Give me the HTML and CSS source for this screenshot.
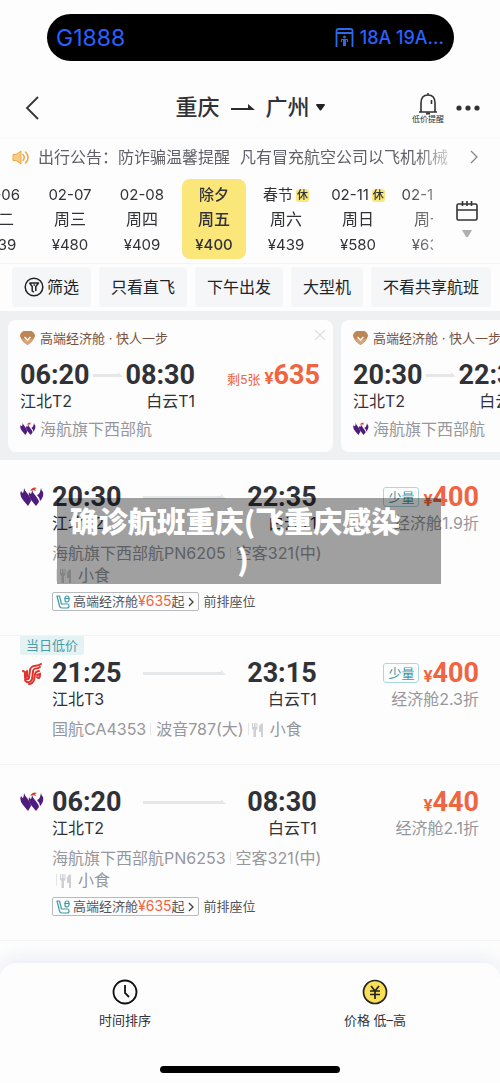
FILE: index.html
```html
<!DOCTYPE html>
<html lang="zh-CN">
<head>
<meta charset="utf-8">
<meta name="viewport" content="width=device-width, initial-scale=1">
<title>重庆 - 广州 航班列表</title>
<link rel="stylesheet" href="styles.css">
</head>
<body>
<svg class="sprite" aria-hidden="true">
  <symbol id="west-air" viewBox="0 0 24 20">
    <path d="M4 1Q5 4 7 6Q11 11 11 14L8 19L3 13Q-1 8 1 4Q2 6 3 6Q4 4 4 1Z" fill="#4f1b7c"/>
    <path d="M12 3Q13 6 15 8Q19 13 19 15L16 19L11 13Q8 8 9 5Q10 7 11 7Q12 5 12 3Z" fill="#4f1b7c"/>
    <path d="M21 1Q21 3 23 5Q24 9 21 13L20 14Q20 11 17 8Q19 8 20 5Z" fill="#4f1b7c"/>
    <path d="M10 4C12 0 15 0 17 1L15 2L16 4C14 3 12 3 10 4Z" fill="#d8402f"/>
  </symbol>
  <symbol id="air-china" viewBox="0 0 20 22">
    <g fill="none" stroke="#e2332b" stroke-width="2" stroke-linecap="round">
      <path d="M19 1C15 4 9 1 8 7L7 14C7 17 3 17 3 14V9L1 8"/>
      <path d="M18 4C14 7 11 4 11 9L10 16C9 20 4 20 3 17"/>
      <path d="M17 8C14 9 14 8 13 11L12 17C11 20 9 21 7 21"/>
      <path d="M5 8V14M15 12L18 11C18 15 17 16 15 14"/>
    </g>
  </symbol>
  <symbol id="gem" viewBox="0 0 15 14">
    <path d="M3.500 0H11.500Q15 2 15 5C14 9 11 12 7.500 14C4 12 1 9 0 5Q0 2 3.500 0Z" fill="#bd8654"/>
    <path d="M1 7Q7 10 14 7C12 10 10 12 7.500 14C5 12 3 10 1 7Z" fill="#d9a67d"/>
    <path d="M4.500 6L7.500 9L10.500 6" fill="none" stroke="#fff" stroke-width="1.400"/>
  </symbol>
  <symbol id="seat" viewBox="0 0 14 14">
    <g fill="none" stroke="#3f9ba5" stroke-width="1.200" stroke-linejoin="round" stroke-linecap="round">
      <path d="M1 1H3.500L5.500 9H12Q13 9 13 11Q13 13 11 13H6Q4 13 3.500 11Z"/>
      <rect x="9" y="1" width="4" height="6" rx="2"/><path d="M9 3.500H13"/>
    </g>
  </symbol>
  <symbol id="meal" viewBox="0 0 12 14">
    <path d="M0 0H1V4H2V0H3.500V4H4.500V0H5.500V5Q5.500 6.500 4 7V14H1.500V7Q0 6.500 0 5ZM11 0V14H9V9H7V4Q7.500 1 11 0Z" fill="#cfd0d3"/>
  </symbol>
  <symbol id="short-arrow" viewBox="0 0 30 6"><path d="M0 2H25V0L30 5H0Z" fill="#e6e7e8"/></symbol>
  <symbol id="long-arrow" viewBox="0 0 83 6"><path d="M0 2H78V0L83 5H0Z" fill="#e6e7e8"/></symbol>
</svg>

<div class="island">
  <span class="island-train">G1888</span>
  <span class="island-seat">
    <svg width="19" height="20" viewBox="0 0 19 20" fill="none" stroke="#2a6bea" stroke-width="1.800"><path d="M1.500 19V3Q1.500 1 3.500 1H15.500Q17.500 1 17.500 3V19M2 5H17"/><circle cx="9.500" cy="9" r="1" fill="#2a6bea" stroke-width="1"/><path d="M9.500 11V18" stroke-width="3"/><path d="M6.500 14V11.500H12.500V14" stroke-width="1"/></svg>
    18A 19A...
  </span>
</div>

<header class="header">
  <button class="icon-btn back" aria-label="返回"><svg width="14" height="24" viewBox="0 0 14 24" fill="none" stroke="#333" stroke-width="1.800"><path d="M13 1L2 12L13 23"/></svg></button>
  <h1 class="route">
    <span>重庆</span>
    <svg width="24" height="8" viewBox="0 0 24 8"><path d="M0 4H17V0L24 6H0Z" fill="#2b2b2e"/></svg>
    <span class="dest">广州<svg width="9" height="7" viewBox="0 0 9 7"><path d="M0 1Q0 0 1 0H8Q9 0 9 1L5 6.500H4Z" fill="#222"/></svg></span>
  </h1>
  <div class="tools">
    <button class="icon-btn alert">
      <svg width="20" height="22" viewBox="0 0 20 22" fill="none" stroke="#333" stroke-width="1.600"><path d="M1 19H19M3 19V10Q3 2 10 2Q17 2 17 10V19M10 0V2M13.500 7V11"/><path d="M8 20.500H12" stroke-width="2"/></svg>
      <span>低价提醒</span>
    </button>
    <button class="icon-btn" aria-label="更多"><svg width="24" height="6" viewBox="0 0 24 6" fill="#333"><circle cx="3" cy="3" r="2.600"/><circle cx="12" cy="3" r="2.600"/><circle cx="21" cy="3" r="2.600"/></svg></button>
  </div>
</header>

<a class="notice" href="#">
  <svg width="18" height="15" viewBox="0 0 18 15"><path d="M1 4.500H4L9 1V14L4 10.500H1Z" fill="#f8cc82" stroke="#eda746" stroke-linejoin="round"/><path d="M11 4.500Q13.500 7.500 11 10.500M13.500 2Q18.500 7.500 13.500 13" fill="none" stroke="#eda746" stroke-width="1.500" stroke-linecap="round"/></svg>
  <span class="notice-text">出行公告：防诈骗温馨提醒<span class="notice-body">凡有冒充航空公司以飞机机械</span></span>
  <svg width="8" height="14" viewBox="0 0 8 14" fill="none" stroke="#85868b" stroke-width="1.300"><path d="M1 1L7 7L1 13"/></svg>
</a>

<nav class="dates">
  <div class="date-strip">
    <button class="date"><span class="day">02-06</span><span class="week">周二</span><span class="fare">¥439</span></button>
    <button class="date"><span class="day">02-07</span><span class="week">周三</span><span class="fare">¥480</span></button>
    <button class="date"><span class="day">02-08</span><span class="week">周四</span><span class="fare">¥409</span></button>
    <button class="date selected" aria-current="date"><span class="day">除夕</span><span class="week">周五</span><span class="fare">¥400</span></button>
    <button class="date"><span class="day">春节<i class="off">休</i></span><span class="week">周六</span><span class="fare">¥439</span></button>
    <button class="date"><span class="day">02-11<i class="off">休</i></span><span class="week">周日</span><span class="fare">¥580</span></button>
    <button class="date"><span class="day">02-12<i class="off">休</i></span><span class="week">周一</span><span class="fare">¥630</span></button>
  </div>
  <button class="calendar" aria-label="选择日期">
    <svg width="22" height="20" viewBox="0 0 22 20" fill="none" stroke="#333" stroke-width="1.600"><rect x="1" y="3" width="20" height="16" rx="1.500"/><path d="M1 9H21M6.500 0V5M11 0V5M15.500 0V5"/></svg>
    <svg width="10" height="8" viewBox="0 0 10 8"><path d="M0 0H10L6 7H4Z" fill="#b0b0b0"/></svg>
  </button>
</nav>

<div class="filters">
  <button class="chip"><svg width="20" height="20" viewBox="0 0 20 20" fill="none" stroke="#222" stroke-width="1.500"><circle cx="10" cy="10" r="8.800"/><path d="M5.500 6H14.500L11.800 9.500V14M5.500 6L8.200 9.500V14L10 15.200M9.500 8H11" stroke-linejoin="round"/></svg>筛选</button>
  <button class="chip">只看直飞</button>
  <button class="chip">下午出发</button>
  <button class="chip">大型机</button>
  <button class="chip">不看共享航班</button>
</div>

<section class="promos">
  <article class="promo">
    <button class="icon-btn close" aria-label="关闭"><svg width="10" height="10" viewBox="0 0 10 10" stroke="#dcdcdc" stroke-width="1.200"><path d="M0 0L10 10M10 0L0 10"/></svg></button>
    <h2 class="promo-title"><svg width="15" height="14"><use href="#gem"/></svg>高端经济舱 · 快人一步</h2>
    <div class="promo-main">
      <div class="times">
        <div class="clock"><time>06:20</time><svg width="30" height="6"><use href="#short-arrow"/></svg><time>08:30</time></div>
        <div class="ports"><span>江北T2</span><span>白云T1</span></div>
      </div>
      <div class="price"><span class="left">剩5张</span><span class="yen">¥</span>635</div>
    </div>
    <p class="carrier"><svg width="16" height="14"><use href="#west-air"/></svg>海航旗下西部航</p>
  </article>
  <article class="promo">
    <h2 class="promo-title"><svg width="15" height="14"><use href="#gem"/></svg>高端经济舱 · 快人一步</h2>
    <div class="promo-main">
      <div class="times">
        <div class="clock"><time>20:30</time><svg width="30" height="6"><use href="#short-arrow"/></svg><time>22:35</time></div>
        <div class="ports"><span>江北T2</span><span>白云T1</span></div>
      </div>
    </div>
    <p class="carrier"><svg width="16" height="14"><use href="#west-air"/></svg>海航旗下西部航</p>
  </article>
</section>

<main class="flights">
  <article class="flight">
    <svg class="logo" width="24" height="20"><use href="#west-air"/></svg>
    <div class="body">
      <div class="summary">
        <div class="times">
          <div class="clock"><time>20:30</time><svg width="83" height="6"><use href="#long-arrow"/></svg><time>22:35</time></div>
          <div class="ports"><span>江北T2</span><span>白云T1</span></div>
        </div>
        <div class="offer">
          <div class="fare-line"><span class="few">少量</span><div class="price"><span class="yen">¥</span>400</div></div>
          <div class="cabin">经济舱1.9折</div>
        </div>
      </div>
      <p class="info"><span>海航旗下西部航PN6205</span><span class="sep">空客321(中)</span> <span class="sep meal"><svg width="12" height="14"><use href="#meal"/></svg>小食</span></p>
      <div class="upgrade"><a class="tag" href="#"><svg width="14" height="14"><use href="#seat"/></svg><span>高端经济舱<b>¥635</b>起</span><svg width="6" height="10" viewBox="0 0 6 10" fill="none" stroke="#444" stroke-width="1.400"><path d="M1 1L5 5L1 9"/></svg></a>前排座位</div>
    </div>
  </article>

  <article class="flight">
    <span class="lowest">当日低价</span>
    <svg class="logo" width="20" height="22"><use href="#air-china"/></svg>
    <div class="body">
      <div class="summary">
        <div class="times">
          <div class="clock"><time>21:25</time><svg width="83" height="6"><use href="#long-arrow"/></svg><time>23:15</time></div>
          <div class="ports"><span>江北T3</span><span>白云T1</span></div>
        </div>
        <div class="offer">
          <div class="fare-line"><span class="few">少量</span><div class="price"><span class="yen">¥</span>400</div></div>
          <div class="cabin">经济舱2.3折</div>
        </div>
      </div>
      <p class="info"><span>国航CA4353</span><span class="sep">波音787(大)</span><span class="sep meal"><svg width="12" height="14"><use href="#meal"/></svg>小食</span></p>
    </div>
  </article>

  <article class="flight">
    <svg class="logo" width="24" height="20"><use href="#west-air"/></svg>
    <div class="body">
      <div class="summary">
        <div class="times">
          <div class="clock"><time>06:20</time><svg width="83" height="6"><use href="#long-arrow"/></svg><time>08:30</time></div>
          <div class="ports"><span>江北T2</span><span>白云T1</span></div>
        </div>
        <div class="offer">
          <div class="fare-line"><div class="price"><span class="yen">¥</span>440</div></div>
          <div class="cabin">经济舱2.1折</div>
        </div>
      </div>
      <p class="info"><span>海航旗下西部航PN6253</span><span class="sep">空客321(中)</span> <span class="sep meal"><svg width="12" height="14"><use href="#meal"/></svg>小食</span></p>
      <div class="upgrade"><a class="tag" href="#"><svg width="14" height="14"><use href="#seat"/></svg><span>高端经济舱<b>¥635</b>起</span><svg width="6" height="10" viewBox="0 0 6 10" fill="none" stroke="#444" stroke-width="1.400"><path d="M1 1L5 5L1 9"/></svg></a>前排座位</div>
    </div>
  </article>

  <div class="caption"><span class="caption-first">确诊航班重庆(飞重庆感染</span><span>)</span></div>
</main>

<footer class="sortbar">
  <div class="sorts">
    <button class="sort"><svg width="26" height="26" viewBox="0 0 26 26" fill="none" stroke="#111" stroke-width="1.800"><circle cx="13" cy="13" r="11.500"/><path d="M13 6V14L17 18"/></svg>时间排序</button>
    <button class="sort"><svg width="26" height="26" viewBox="0 0 26 26" fill="none" stroke="#222" stroke-width="1.700"><circle cx="13" cy="13" r="11.500" fill="#f9df55"/><path d="M9 7L13 12L17 7M8 12H18M8 15.500H18M13 12V20"/></svg>价格 低–高</button>
  </div>
  <div class="home-bar"></div>
</footer>
</body>
</html>
```

FILE: styles.css
```css
* {
  box-sizing: border-box;
}

body {
  margin: 0;
  min-height: 100vh;
  display: flex;
  flex-direction: column;
  overflow-x: hidden;
  background: #fdfdfd;
  color: #303238;
  font: 16px/22px Inter, "Noto Sans CJK SC", sans-serif;
}

button {
  margin: 0;
  padding: 0;
  border: 0;
  background: none;
  color: inherit;
  font: inherit;
}

a {
  color: inherit;
  text-decoration: none;
}

h1, h2, p {
  margin: 0;
  font-weight: 400;
}

svg {
  flex: none;
}

.sprite {
  position: absolute;
  width: 0;
  height: 0;
}

.icon-btn {
  display: flex;
  align-items: center;
}

/* Status island */
.island {
  display: flex;
  justify-content: space-between;
  align-items: center;
  height: 47px;
  margin: 14px 46px 0 47px;
  padding: 0 10px 0 9px;
  border-radius: 24px;
  background: #000;
  color: #2b61ff;
}

.island-train {
  font-size: 23px;
}

.island-seat {
  display: flex;
  align-items: center;
  gap: 6px;
  font-size: 18px;
  font-weight: 500;
}

/* Header */
.header {
  display: grid;
  grid-template-columns: 1fr auto 1fr;
  align-items: center;
  padding: 25px 20px 9px;
  border-bottom: 1px solid #fafafa;
}

.back {
  padding-left: 5px;
}

.route {
  display: flex;
  align-items: center;
  gap: 11px;
  font-size: 22px;
  line-height: 43px;
  font-weight: 500;
}

.dest {
  display: flex;
  align-items: center;
  gap: 6px;
}

.tools {
  display: flex;
  justify-content: flex-end;
  align-items: center;
  gap: 12px;
}

.alert {
  flex-direction: column;
  font-size: 8px;
  line-height: 8px;
}

/* Notice */
.notice {
  display: flex;
  align-items: center;
  gap: 8px;
  height: 36px;
  padding: 0 22px 0 12px;
  color: #606168;
}

.notice-text {
  flex: 1;
  min-width: 0;
  margin-right: 14px;
  overflow: hidden;
  white-space: nowrap;
  mask-image: linear-gradient(to right, #000 92%, rgba(0, 0, 0, 0.3));
}

.notice-body {
  margin-left: 10px;
}

/* Dates */
.dates {
  display: flex;
  padding: 4px 0;
  border-bottom: 1px solid #f4f4f5;
}

.date-strip {
  flex: 1;
  min-width: 0;
  display: flex;
  gap: 8px;
  overflow: hidden;
  mask-image: linear-gradient(to right, #000 92%, rgba(0, 0, 0, 0.6));
}

.date {
  flex: 0 0 64px;
  display: flex;
  flex-direction: column;
  align-items: center;
  padding: 4px 0 0;
  border-radius: 8px;
  line-height: 24px;
  white-space: nowrap;
}

.date:first-child {
  margin-left: -34px;
}

.day,
.fare {
  font-size: 15px;
}

.fare {
  line-height: 28px;
}

.day {
  display: flex;
  align-items: center;
  justify-content: center;
  gap: 3px;
}

.selected {
  background: #fbe679;
  font-weight: 500;
}

.off {
  padding: 0 1px;
  border-radius: 3px;
  background: #fbe679;
  font-size: 11px;
  line-height: 13px;
  font-style: normal;
  font-weight: 500;
}

.calendar {
  flex: 0 0 67px;
  display: flex;
  flex-direction: column;
  align-items: center;
  justify-content: center;
  gap: 9px;
}

/* Filters */
.filters {
  display: flex;
  gap: 8px;
  padding: 3px 9px 4px 12px;
  overflow: hidden;
}

.chip {
  flex: none;
  display: flex;
  align-items: center;
  gap: 3px;
  height: 40px;
  padding: 0 12px;
  border-radius: 4px;
  background: #f5f6f8;
  color: #222327;
}

/* Promoted fares */
.promos {
  display: flex;
  gap: 8px;
  padding: 9px 8px 8px;
  overflow: hidden;
  background: #eff0f2;
}

.promo {
  position: relative;
  flex: 0 0 325px;
  padding: 8px 13px 12px 12px;
  border-radius: 8px;
  background: #fdfdfd;
}

.close {
  position: absolute;
  top: 10px;
  right: 8px;
}

.promo-title {
  display: flex;
  align-items: center;
  gap: 5px;
  font-size: 13px;
  line-height: 20px;
  color: #76513f;
}

.promo-main {
  display: flex;
  justify-content: space-between;
  margin-top: 12px;
}

.promo .times {
  width: 175px;
}

.carrier {
  display: flex;
  align-items: center;
  gap: 4px;
  margin-top: 6px;
  color: #96979c;
}

/* Shared flight parts */
.clock,
.ports {
  display: flex;
  align-items: center;
  justify-content: space-between;
}

.clock,
.price {
  font: 700 27px/30px Roboto, "Noto Sans CJK SC", sans-serif;
}

.price {
  color: #f0643f;
  white-space: nowrap;
}

.yen {
  font-size: 17px;
  line-height: 1;
}

.left {
  margin-right: 4px;
  font-size: 13px;
  line-height: 1;
  font-weight: 400;
}

/* Flight list */
.flights {
  position: relative;
}

.flight {
  position: relative;
  display: flex;
  padding: 22px 21px 24px 20px;
  border-bottom: 1px solid #f3f3f4;
}

.logo {
  width: 24px;
  margin: 5px 8px 0 0;
}

.body {
  flex: 1;
  min-width: 0;
}

.summary {
  display: flex;
  justify-content: space-between;
}

.summary .times {
  width: 62%;
}

.offer {
  text-align: right;
}

.fare-line {
  display: flex;
  justify-content: flex-end;
  align-items: center;
  gap: 4px;
}

.few {
  padding: 0 4px;
  border: 1px solid #a9d8dd;
  border-radius: 3px;
  color: #3f97a3;
  font-size: 13px;
  line-height: 18px;
}

.cabin,
.info {
  color: #96979c;
}

.info {
  max-width: 70%;
  margin-top: 8px;
}

.info span {
  display: inline-block;
}

.info .sep::before {
  content: "";
  display: inline-block;
  width: 1px;
  height: 12px;
  margin: 0 5px 0 4px;
  background: #e4e5e7;
}

.info .meal::before {
  margin-right: 3px;
}

.meal svg {
  margin-right: 6px;
  vertical-align: -2px;
}

.upgrade {
  display: flex;
  align-items: center;
  gap: 5px;
  margin-top: 6px;
  font-size: 13px;
  line-height: 17px;
  color: #55565c;
}

.tag {
  display: flex;
  align-items: center;
  gap: 3px;
  padding: 0 4px 0 3px;
  border: 1px solid #b9babd;
  border-radius: 2px;
}

.tag b {
  font-size: 14px;
  line-height: 1;
  font-weight: 400;
  color: #f0643f;
}

.lowest {
  position: absolute;
  top: 0;
  left: 20px;
  padding: 0 6px;
  border-radius: 0 0 3px 3px;
  background: #e4f2f4;
  color: #4b9ca6;
  font-size: 13px;
  line-height: 19px;
}

.caption {
  position: absolute;
  top: 38px;
  left: 57px;
  right: 59px;
  padding: 3px 12px 7px 0;
  background: rgba(0, 0, 0, 0.37);
  color: #fff;
  font: 900 29px/38px "Noto Sans CJK SC", sans-serif;
  text-align: center;
}

.caption span {
  display: block;
}

.caption-first {
  padding-right: 16px;
  white-space: nowrap;
}

/* Sort bar */
.sortbar {
  position: relative;
  margin-top: auto;
  padding: 16px 0 10px;
  border-radius: 16px 16px 0 0;
  background: #fdfdfd;
  box-shadow: 0 -4px 20px #e9ebf5;
}

.sorts {
  display: grid;
  grid-template-columns: 1fr 1fr;
}

.sort {
  display: flex;
  flex-direction: column;
  align-items: center;
  gap: 4px;
  font-size: 13px;
}

.home-bar {
  width: 36%;
  height: 7px;
  margin: 35px auto 0;
  border-radius: 4px;
  background: #000;
}
```
